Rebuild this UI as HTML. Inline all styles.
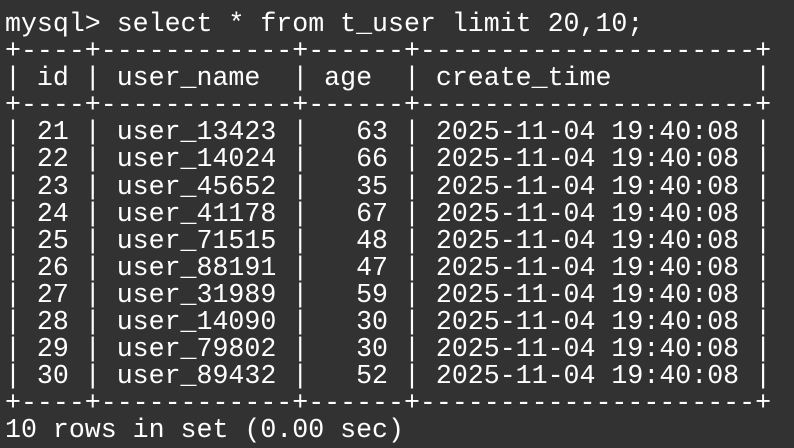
<!DOCTYPE html>
<html><head><style>
html,body{margin:0;padding:0;background:#323232;width:794px;height:448px;overflow:hidden}
pre{margin:0;padding:11px 0 0 5px;font-family:"Liberation Mono",monospace;font-size:26.6px;line-height:27.1px;color:#ffffff;letter-spacing:0}
</style></head><body><pre>mysql&gt; select * from t_user limit 20,10;
+----+------------+------+---------------------+
| id | user_name  | age  | create_time         |
+----+------------+------+---------------------+
| 21 | user_13423 |   63 | 2025-11-04 19:40:08 |
| 22 | user_14024 |   66 | 2025-11-04 19:40:08 |
| 23 | user_45652 |   35 | 2025-11-04 19:40:08 |
| 24 | user_41178 |   67 | 2025-11-04 19:40:08 |
| 25 | user_71515 |   48 | 2025-11-04 19:40:08 |
| 26 | user_88191 |   47 | 2025-11-04 19:40:08 |
| 27 | user_31989 |   59 | 2025-11-04 19:40:08 |
| 28 | user_14090 |   30 | 2025-11-04 19:40:08 |
| 29 | user_79802 |   30 | 2025-11-04 19:40:08 |
| 30 | user_89432 |   52 | 2025-11-04 19:40:08 |
+----+------------+------+---------------------+
10 rows in set (0.00 sec)</pre></body></html>
